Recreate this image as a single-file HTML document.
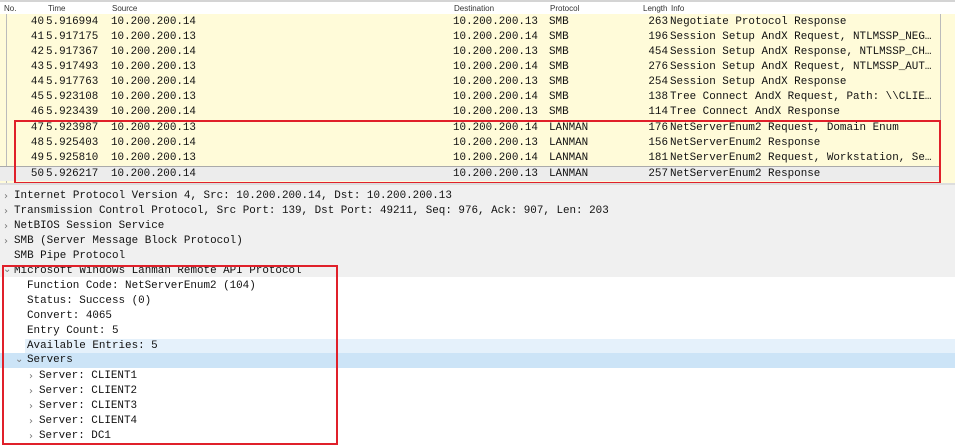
<!DOCTYPE html>
<html><head><meta charset="utf-8"><style>
*{margin:0;padding:0;box-sizing:border-box}
body{width:955px;height:447px;overflow:hidden;background:#fff;position:relative;font-family:"Liberation Mono",monospace;font-size:10.9px;color:#111}
.hdr{position:absolute;left:0;top:0;width:955px;height:14px;background:#fff;border-top:2px solid #d4d4d4;font-family:"Liberation Sans",sans-serif;font-size:8px;color:#333}
.hdr span{position:absolute;top:2px}
.list{position:absolute;left:0;top:14px;width:955px;height:169px;background:#fffbd9}
.row{position:absolute;left:0;width:940px;height:15px;line-height:15px;white-space:pre;overflow:hidden}
.row span{position:absolute;top:1px}
.sel{background:#ececec}
.rt{position:absolute;left:940px;top:14px;width:15px;height:169px;background:#fffbd9;border-left:1px solid #bbb}
.red{position:absolute;border:2px solid #e0202a}
.det{position:absolute;left:0;top:183px;width:955px;height:94px;background:#f0f0f0;border-top:2px solid #ddd}
.d{position:absolute;height:15px;line-height:17px;white-space:pre}
.ar{position:absolute;font-family:"DejaVu Sans",sans-serif;font-size:10px;color:#777;line-height:17px}
.n{width:17px;text-align:right;left:27px}
.l{width:25px;text-align:right;left:643px}
</style></head><body>
<div class="hdr"><span style="left:4px">No.</span><span style="left:48px">Time</span><span style="left:112px">Source</span><span style="left:454px">Destination</span><span style="left:550px">Protocol</span><span style="left:643px">Length</span><span style="left:671px">Info</span></div>
<div class="list"></div>
<div style="position:absolute;left:6px;top:14px;width:1px;height:169px;background:#bbb"></div>
<div class="rt"></div>

<div class="row" style="top:14px"><span class="n">40</span><span style="left:46px">5.916994</span><span style="left:111px">10.200.200.14</span><span style="left:453px">10.200.200.13</span><span style="left:549px">SMB</span><span class="l">263</span><span style="left:670px">Negotiate Protocol Response</span></div>
<div class="row" style="top:29px"><span class="n">41</span><span style="left:46px">5.917175</span><span style="left:111px">10.200.200.13</span><span style="left:453px">10.200.200.14</span><span style="left:549px">SMB</span><span class="l">196</span><span style="left:670px">Session Setup AndX Request, NTLMSSP_NEG…</span></div>
<div class="row" style="top:44px"><span class="n">42</span><span style="left:46px">5.917367</span><span style="left:111px">10.200.200.14</span><span style="left:453px">10.200.200.13</span><span style="left:549px">SMB</span><span class="l">454</span><span style="left:670px">Session Setup AndX Response, NTLMSSP_CH…</span></div>
<div class="row" style="top:59px"><span class="n">43</span><span style="left:46px">5.917493</span><span style="left:111px">10.200.200.13</span><span style="left:453px">10.200.200.14</span><span style="left:549px">SMB</span><span class="l">276</span><span style="left:670px">Session Setup AndX Request, NTLMSSP_AUT…</span></div>
<div class="row" style="top:74px"><span class="n">44</span><span style="left:46px">5.917763</span><span style="left:111px">10.200.200.14</span><span style="left:453px">10.200.200.13</span><span style="left:549px">SMB</span><span class="l">254</span><span style="left:670px">Session Setup AndX Response</span></div>
<div class="row" style="top:89px"><span class="n">45</span><span style="left:46px">5.923108</span><span style="left:111px">10.200.200.13</span><span style="left:453px">10.200.200.14</span><span style="left:549px">SMB</span><span class="l">138</span><span style="left:670px">Tree Connect AndX Request, Path: \\CLIE…</span></div>
<div class="row" style="top:104px"><span class="n">46</span><span style="left:46px">5.923439</span><span style="left:111px">10.200.200.14</span><span style="left:453px">10.200.200.13</span><span style="left:549px">SMB</span><span class="l">114</span><span style="left:670px">Tree Connect AndX Response</span></div>
<div class="row" style="top:120px"><span class="n">47</span><span style="left:46px">5.923987</span><span style="left:111px">10.200.200.13</span><span style="left:453px">10.200.200.14</span><span style="left:549px">LANMAN</span><span class="l">176</span><span style="left:670px">NetServerEnum2 Request, Domain Enum</span></div>
<div class="row" style="top:135px"><span class="n">48</span><span style="left:46px">5.925403</span><span style="left:111px">10.200.200.14</span><span style="left:453px">10.200.200.13</span><span style="left:549px">LANMAN</span><span class="l">156</span><span style="left:670px">NetServerEnum2 Response</span></div>
<div class="row" style="top:150px"><span class="n">49</span><span style="left:46px">5.925810</span><span style="left:111px">10.200.200.13</span><span style="left:453px">10.200.200.14</span><span style="left:549px">LANMAN</span><span class="l">181</span><span style="left:670px">NetServerEnum2 Request, Workstation, Se…</span></div>
<div class="row sel" style="top:166px;border-top:1px solid #aaa"><span class="n" style="top:0">50</span><span style="left:46px;top:0">5.926217</span><span style="left:111px;top:0">10.200.200.14</span><span style="left:453px;top:0">10.200.200.13</span><span style="left:549px;top:0">LANMAN</span><span class="l" style="top:0">257</span><span style="left:670px;top:0">NetServerEnum2 Response</span></div>
<div class="red" style="left:14px;top:120px;width:927px;height:64px"></div>

<div class="det"></div>
<div class="ar" style="left:4px;top:188px">›</div><div class="d" style="left:14px;top:188px">Internet Protocol Version 4, Src: 10.200.200.14, Dst: 10.200.200.13</div>
<div class="ar" style="left:4px;top:203px">›</div><div class="d" style="left:14px;top:203px">Transmission Control Protocol, Src Port: 139, Dst Port: 49211, Seq: 976, Ack: 907, Len: 203</div>
<div class="ar" style="left:4px;top:218px">›</div><div class="d" style="left:14px;top:218px">NetBIOS Session Service</div>
<div class="ar" style="left:4px;top:233px">›</div><div class="d" style="left:14px;top:233px">SMB (Server Message Block Protocol)</div>
<div class="d" style="left:14px;top:248px">SMB Pipe Protocol</div>
<div class="ar" style="left:3px;top:261px">⌄</div><div class="d" style="left:14px;top:263px">Microsoft Windows Lanman Remote API Protocol</div>
<div class="d" style="left:27px;top:278px">Function Code: NetServerEnum2 (104)</div>
<div class="d" style="left:27px;top:293px">Status: Success (0)</div>
<div class="d" style="left:27px;top:308px">Convert: 4065</div>
<div class="d" style="left:27px;top:323px">Entry Count: 5</div>
<div class="d" style="left:25px;top:339px;width:930px;background:#e5f1fb;padding-left:2px;line-height:15px">Available Entries: 5</div>
<div class="d" style="left:0;top:353px;width:955px;background:#cce4f7;padding-left:27px;line-height:15px">Servers</div>
<div class="ar" style="left:15px;top:351px">⌄</div>
<div class="ar" style="left:29px;top:368px">›</div><div class="d" style="left:39px;top:368px">Server: CLIENT1</div>
<div class="ar" style="left:29px;top:383px">›</div><div class="d" style="left:39px;top:383px">Server: CLIENT2</div>
<div class="ar" style="left:29px;top:398px">›</div><div class="d" style="left:39px;top:398px">Server: CLIENT3</div>
<div class="ar" style="left:29px;top:413px">›</div><div class="d" style="left:39px;top:413px">Server: CLIENT4</div>
<div class="ar" style="left:29px;top:428px">›</div><div class="d" style="left:39px;top:428px">Server: DC1</div>
<div class="red" style="left:2px;top:265px;width:336px;height:180px"></div>
</body></html>
